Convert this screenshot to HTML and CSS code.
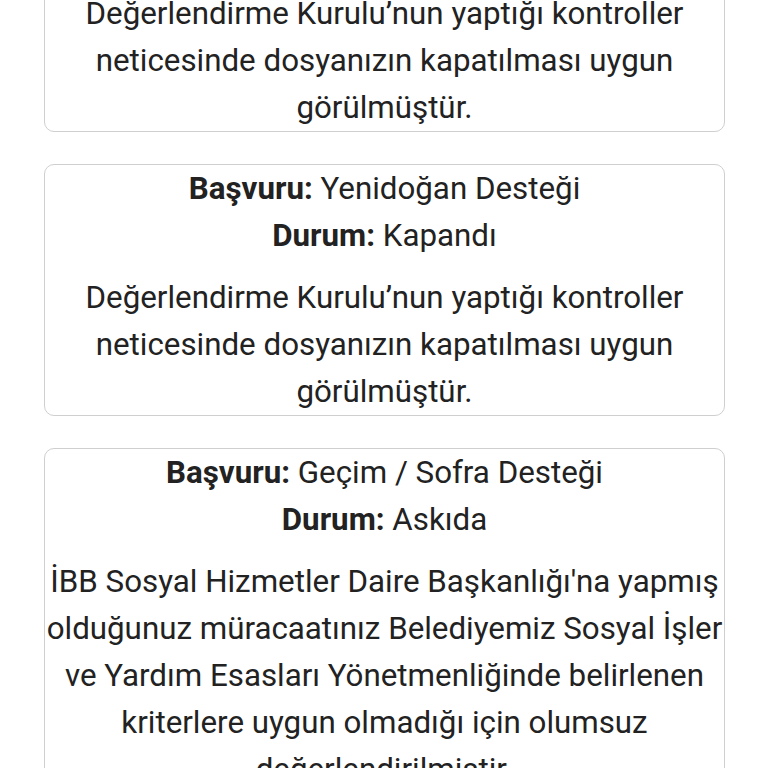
FILE: index.html
```html
<!DOCTYPE html>
<html lang="tr">
<head>
  <meta charset="UTF-8">
  <meta name="viewport" content="width=device-width, initial-scale=1.0">
  <title>Başvurularım</title>
  <link rel="stylesheet" href="styles.css">
</head>
<body>
  <div class="list">
    <div class="card">
      <div class="line"><b>Başvuru:</b> Yenidoğan Desteği</div>
      <div class="line"><b>Durum:</b> Kapandı</div>
      <p class="note">Değerlendirme Kurulu’nun yaptığı kontroller neticesinde dosyanızın kapatılması uygun görülmüştür.</p>
    </div>

    <div class="card">
      <div class="line"><b>Başvuru:</b> Yenidoğan Desteği</div>
      <div class="line"><b>Durum:</b> Kapandı</div>
      <p class="note">Değerlendirme Kurulu’nun yaptığı kontroller neticesinde dosyanızın kapatılması uygun görülmüştür.</p>
    </div>

    <div class="card">
      <div class="line"><b>Başvuru:</b> Geçim / Sofra Desteği</div>
      <div class="line"><b>Durum:</b> Askıda</div>
      <p class="note">İBB Sosyal Hizmetler Daire Başkanlığı'na yapmış olduğunuz müracaatınız Belediyemiz Sosyal İşler ve Yardım Esasları Yönetmenliğinde belirlenen kriterlere uygun olmadığı için olumsuz değerlendirilmiştir.</p>
    </div>
  </div>
</body>
</html>
```

FILE: styles.css
```css
body {
  margin: 0;
  font-family: Roboto, "Noto Sans", sans-serif;
  background: white;
  color: #222;
  overflow: hidden;
}

.list {
  display: flex;
  flex-direction: column;
  gap: 32px;
  margin: -120px 43px 0 44px;
}

.card {
  border: 1px solid #cfcfcf;
  border-radius: 10px;
  padding: 0;
  text-align: center;
  font-size: 31.3px;
  line-height: 47px;
}

.line b {
  font-weight: 700;
}

.note {
  margin: 15px 0 0;
}
```
